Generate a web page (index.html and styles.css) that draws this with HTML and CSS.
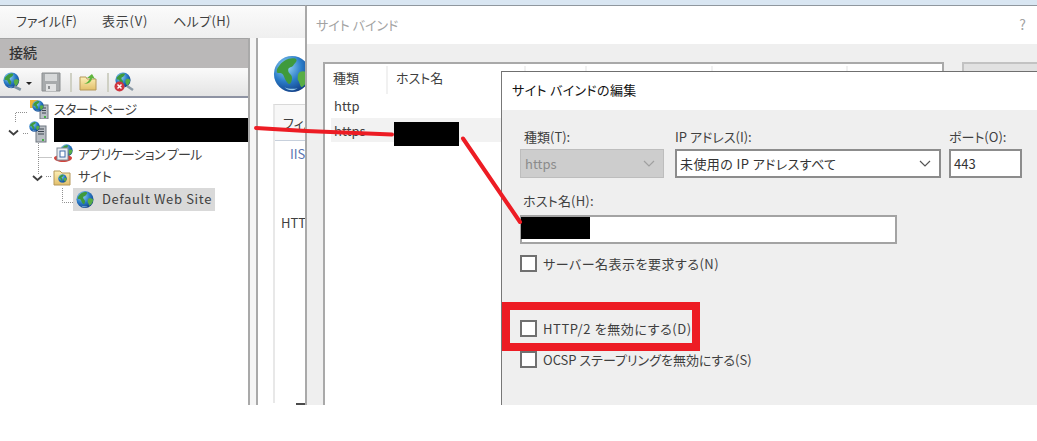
FILE: index.html
```html
<!DOCTYPE html>
<html lang="ja">
<head>
<meta charset="utf-8">
<title>サイト バインド</title>
<link rel="stylesheet" href="styles.css">
</head>
<body>
<svg class="defs" width="0" height="0" aria-hidden="true">
  <defs>
    <radialGradient id="sea" cx="35%" cy="30%" r="75%">
      <stop offset="0" stop-color="#9bd8f5"/>
      <stop offset=".55" stop-color="#2a7cc8"/>
      <stop offset="1" stop-color="#123f86"/>
    </radialGradient>
    <linearGradient id="folder" x1="0" y1="0" x2="0" y2="1">
      <stop offset="0" stop-color="#fdf0b8"/>
      <stop offset="1" stop-color="#e2bf6a"/>
    </linearGradient>
    <symbol id="globe" viewBox="0 0 20 20">
      <circle cx="10" cy="10" r="9.5" fill="url(#sea)"/>
      <path d="M3 6c2-3 6-5 9-4 1 1 0 2-1 3-1 2-3 1-3 3 0 2 2 2 2 4 0 2-1 4-2 3-2-2-2-4-3-5-1-1-3 0-3-1 0-1 0-2 1-3z" fill="#3f9a3c"/>
      <path d="M14 9c2-1 4 0 5 1 0 3-2 6-4 7-1-1-1-3-2-4 0-2 0-3 1-4z" fill="#58ad45"/>
      <path d="M6 17c2 1 5 1 7 .5-2 1.500-5 1.500-7-.5z" fill="#9fd0ee"/>
    </symbol>
    <symbol id="server" viewBox="0 0 18 22">
      <rect x="7" y="5" width="10" height="16" fill="#b9bec4" stroke="#6f7780"/>
      <path d="M9 8h6M9 10.500h6M9 13h6" stroke="#3d4650" fill="none"/>
      <rect x="13" y="18" width="2" height="2" fill="#45b045"/>
      <use href="#globe" x="0" y="0" width="11" height="11"/>
    </symbol>
    <symbol id="start" viewBox="0 0 20 20">
      <path d="M1 1h8v8H1z" fill="#f0b53c"/>
      <rect x="11" y="6" width="8" height="14" fill="#b9bec4" stroke="#6f7780"/>
      <path d="M13 9h4M13 11.500h4M13 14h4" stroke="#3d4650" fill="none"/>
      <rect x="15" y="17" width="2" height="2" fill="#45b045"/>
      <use href="#globe" x="3" y="1" width="12" height="12"/>
    </symbol>
    <symbol id="pool" viewBox="0 0 20 20">
      <use href="#globe" x="7" y="0" width="13" height="13"/>
      <path d="M1 14c0-2 4-3 9-3s9 1 9 3-4 4-9 4-9-2-9-4z" fill="#d2443c"/>
      <rect x="4" y="4" width="11" height="12" fill="#e9edf2" stroke="#7f8a96"/>
      <rect x="7" y="7" width="5" height="6" fill="#fff" stroke="#3f6aa8"/>
    </symbol>
    <symbol id="site" viewBox="0 0 18 18">
      <path d="M1 3h6l2 2h8v12H1z" fill="url(#folder)" stroke="#b5985a"/>
      <use href="#globe" x="5" y="6" width="9" height="9"/>
    </symbol>
    <symbol id="floppy" viewBox="0 0 20 20">
      <path d="M1 1h18v18H1z" fill="#a7aaac" stroke="#8c8f91"/>
      <rect x="4" y="2" width="12" height="7" fill="#d7d9da"/>
      <rect x="5" y="12" width="10" height="7" fill="#e1e2e3"/>
      <rect x="7" y="14" width="2" height="3" fill="#8c8f91"/>
    </symbol>
    <symbol id="up" viewBox="0 0 18 18">
      <path d="M1 4h6l1 2h9v11H1z" fill="url(#folder)" stroke="#b5985a"/>
      <path d="M5 11c3-1 5-3 6-6L8 5l5-4 3 5-3-1c0 3-3 6-8 6z" fill="#5fb53c"/>
    </symbol>
    <symbol id="disc" viewBox="0 0 21 20">
      <use href="#globe" x="1" y="0" width="16" height="16"/>
      <path d="M13 14l6 4" stroke="#8c9aa6" stroke-width="2.500" fill="none"/>
      <circle cx="5.500" cy="14.500" r="5" fill="#cf3640"/>
      <path d="M3.500 12.500l4 4m0-4l-4 4" stroke="#fff" stroke-width="1.500" fill="none"/>
    </symbol>
    <symbol id="conn" viewBox="0 0 18 18">
      <use href="#globe" x="0" y="0" width="15" height="15"/>
      <path d="M10 13l6 3" stroke="#7f93a3" stroke-width="2.500" fill="none"/>
    </symbol>
  </defs>
</svg>

<div class="stage">
  <div class="topstrip"></div>
  <div class="app">
    <nav class="menubar">
      <span class="menu-item mi-file">ファイル(F)</span>
      <span class="menu-item mi-view">表示(V)</span>
      <span class="menu-item mi-help">ヘルプ(H)</span>
    </nav>
    <div class="panes">
      <aside class="conn-pane">
        <div class="conn-head">接続</div>
        <div class="toolbar">
          <svg class="ti ti-conn"><use href="#conn"/></svg>
          <span class="caret"></span>
          <svg class="ti ti-floppy"><use href="#floppy"/></svg>
          <span class="tsep"></span>
          <svg class="ti ti-up"><use href="#up"/></svg>
          <span class="tsep"></span>
          <svg class="ti ti-disc"><use href="#disc"/></svg>
        </div>
        <div class="tree">
          <svg class="tree-lines" width="249" height="120" aria-hidden="true">
            <path d="M15.500 24V14.500H28M23 35.500h5M38.500 45v31M38.500 59.500H52M46 78.500h6M62.500 90v14.500H74" fill="none" stroke="#8f8f8f" stroke-dasharray="1 1"/>
            <path d="M9 32.500l4.500 4 4.500-4M33 78l4.500 4 4.500-4" fill="none" stroke="#404040" stroke-width="1.800"/>
          </svg>
          <div class="node n-start"><svg class="ni ni-start"><use href="#start"/></svg><span>スタート ページ</span></div>
          <div class="node n-server"><svg class="ni ni-server"><use href="#server"/></svg></div>
          <div class="node n-pool"><svg class="ni ni-pool"><use href="#pool"/></svg><span>アプリケーション プール</span></div>
          <div class="node n-site"><svg class="ni ni-site"><use href="#site"/></svg><span>サイト</span></div>
          <div class="node n-web"><svg class="ni ni-web"><use href="#globe"/></svg><span>Default Web Site</span></div>
        </div>
      </aside>
      <div class="gutter"></div>
      <main class="home">
        <svg class="home-globe"><use href="#globe"/></svg>
        <div class="home-box">
          <div class="home-filter">フィルター</div>
          <div class="home-iis">IIS</div>
          <div class="home-http">HTTP</div>
        </div>
        <div class="home-foot"></div>
      </main>
    </div>
  </div>

  <section class="dialog d-bind">
    <header class="dlg-title d-bind-title"><span>サイト バインド</span><span class="help">?</span></header>
    <div class="d-bind-body">
      <div class="listbox">
        <div class="lrow lhead">
          <span class="c c1">種類</span><span class="c c2">ホスト名</span><span class="c c3">ポート</span><span class="c c4">IP アドレス</span><span class="c c5">バインド情報</span><span class="c c6"></span>
        </div>
        <div class="lrow lplain"><span class="c1p">http</span></div>
        <div class="lrow lsel"><span class="c1p">https</span></div>
      </div>
      <div class="sidebtn"></div>
    </div>
  </section>

  <section class="dialog d-edit">
    <header class="dlg-title d-edit-title">サイト バインドの編集</header>
    <div class="d-edit-body">
      <div class="form-grid">
        <label class="lbl lbl-type">種類(T):</label>
        <label class="lbl">IP アドレス(I):</label>
        <label class="lbl">ポート(O):</label>
        <div class="field f-disabled">https<svg class="chev" viewBox="0 0 12 7"><path d="M1 1l5 5 5-5" fill="none" stroke="#a0a0a0" stroke-width="1.200"/></svg></div>
        <div class="field f-ip"><span class="ip-text">未使用の IP アドレスすべて</span><svg class="chev" viewBox="0 0 12 7"><path d="M1 1l5 5 5-5" fill="none" stroke="#555" stroke-width="1.200"/></svg></div>
        <div class="field f-port">443</div>
      </div>
      <label class="lbl lbl-host">ホスト名(H):</label>
      <div class="host-input"></div>
      <div class="check c-sni"><span class="box"></span>サーバー名表示を要求する(N)</div>
      <div class="check c-http2"><span class="box"></span>HTTP/2 を無効にする(D)</div>
      <div class="check c-ocsp"><span class="box"></span>OCSP ステープリングを無効にする(S)</div>
    </div>
  </section>

  <div class="mask m-tree"></div>
  <div class="mask m-list"></div>
  <div class="mask m-host"></div>
  <div class="redbox"></div>
  <svg class="ink" width="1037" height="441" aria-hidden="true">
    <path d="M256 128L306 131L392 134.500M463 138.500L520 222" fill="none" stroke="#ed1c24" stroke-width="4" stroke-linecap="round"/>
  </svg>
</div>
</body>
</html>
```

FILE: styles.css
```css
* { box-sizing: border-box; }
html, body { margin: 0; padding: 0; background: #fff; }
body {
  font-family: "Noto Sans CJK JP", "Noto Sans", sans-serif;
  font-size: 13px;
  font-feature-settings: "palt";
  color: #3f3f3f;
  overflow: hidden;
}
.defs { position: absolute; }
svg { display: block; }
.stage { position: relative; width: 1037px; height: 441px; overflow: hidden; }

.topstrip { height: 5px; background: #d9e6f2; }
.app { height: 400px; border-top: 1px solid #8f979e; display: flex; flex-direction: column; background: #f3f3f3; overflow: hidden; }

.menubar {
  height: 32px; display: flex; align-items: center; padding: 0 0 4px 16px;
  background: linear-gradient(#fbfbfb, #efefef);
}
.menu-item { white-space: nowrap; }
.mi-view { margin-left: 25px; letter-spacing: .8px; }
.mi-help { margin-left: 25px; letter-spacing: .3px; }
.panes { flex: 1; display: flex; min-height: 0; }

.conn-pane { width: 250px; flex: none; display: flex; flex-direction: column; border-right: 2px solid #a9a9a9; background: #fff; }
.conn-head { height: 30px; background: #bab8b8; border-top: 1px solid #a3a3a3; padding: 3px 0 0 9px; color: #333; font-size: 14px; font-weight: 500; line-height: 20px; flex: none; }
.toolbar {
  height: 30px; display: flex; align-items: center; padding-left: 3px; flex: none;
  background: linear-gradient(#fafafa, #e4e4e4);
  border-bottom: 2px solid #8e93a3;
}
.ti { flex: none; }
.ti-conn { width: 20px; height: 20px; }
.caret { width: 0; height: 0; border: 3px solid transparent; border-top: 3px solid #222; border-bottom: 0; margin: 2px 0 0 3px; }
.ti-floppy { width: 20px; height: 20px; margin-left: 9px; }
.tsep { width: 2px; height: 19px; background: #cfd0c4; margin: 0 7px 0 9px; }
.ti-up { width: 18px; height: 18px; }
.ti-up + .tsep { margin: 0 5px 0 10px; }
.ti-disc { width: 21px; height: 20px; }

.tree { position: relative; flex: 1; }
.tree-lines { position: absolute; left: 0; top: 0; }
.node { height: 22.5px; display: flex; align-items: center; position: relative; white-space: nowrap; }
.node span { margin-top: -2px; }
.ni { flex: none; }
.n-start { padding-left: 29px; gap: 5px; letter-spacing: -.6px; }
.ni-start { width: 20px; height: 20px; }
.n-server { padding-left: 29px; }
.ni-server { width: 18px; height: 22px; }
.n-pool { padding-left: 53px; gap: 5px; letter-spacing: -.75px; }
.ni-pool { width: 20px; height: 20px; }
.n-site { padding-left: 53px; gap: 7px; }
.ni-site { width: 18px; height: 18px; }
.n-web { margin-left: 73px; width: 142px; padding-left: 3px; gap: 8px; background: #d9d9d9; letter-spacing: .65px; }
.ni-web { width: 18px; height: 19px; }

.gutter { width: 8px; flex: none; background: #f5f5f5; border-right: 2px solid #a9a9a9; }
.home { flex: 1; display: flex; flex-direction: column; background: #fff; padding-top: 17px; min-width: 0; overflow: hidden; }
.home-globe { width: 38px; height: 38px; margin: 0 0 11px 15px; flex: none; }
.home-box { flex: 1; margin-left: 15px; border-left: 2px solid #e8e8e8; border-top: 1px solid #d9d9d9; white-space: nowrap; }
.home-filter { height: 36px; padding: 8px 0 0 8px; border-bottom: 1px solid #c7d0dc; background: #f7f7f7; }
.home-iis { color: #5a74b0; padding: 3px 0 0 15px; }
.home-http { padding: 50px 0 0 6px; }
.home-foot { height: 2px; flex: none; margin-left: 38px; background: #4a4a4a; }

.dialog { position: absolute; display: flex; flex-direction: column; background: #efefef; overflow: hidden; }
.d-bind { left: 305px; top: 5px; width: 732px; height: 400px; border-left: 2px solid #a9a9a9; border-top: 1px solid #8f979e; }
.dlg-title { flex: none; background: #fff; }
.d-bind-title { height: 38px; display: flex; justify-content: space-between; align-items: center; padding: 0 11px 2px 9px; color: #a3a3a3; }
.help { font-size: 14px; }
.d-bind-body { flex: 1; display: flex; align-items: flex-start; padding: 18px 0 0 16px; gap: 18px; min-height: 0; }
.listbox { width: 621px; height: 400px; background: #fff; border: 2px solid #a9a9a9; flex: none; }
.lrow { display: flex; height: 24px; align-items: center; }
.lhead { height: 30px; align-items: flex-start; padding-top: 2px; }
.c { height: 28px; flex: none; padding-left: 8px; border-right: 2px solid #f1f1f1; line-height: 24px; }
.c1 { width: 63px; }
.c2 { width: 138px; }
.c3 { width: 61px; }
.c4 { width: 126px; }
.c5 { width: 135px; }
.c6 { width: 94px; border-right: 0; }
.c1p { padding-left: 3px; }
.lplain { padding-left: 6px; }
.lplain .c1p { margin-top: -2px; }
.lsel { margin-left: 6px; background: #f2f2f2; }
.sidebtn { flex: 1; height: 30px; background: #e1e1e1; border: 2px solid #c2c2c2; border-right: 0; }

.d-edit { left: 501px; top: 71px; width: 536px; height: 334px; border-left: 1px solid #777; border-top: 1px solid #6f6f6f; }
.d-edit-title { height: 38px; padding: 8px 0 0 10px; color: #111; line-height: 20px; letter-spacing: .35px; }
.d-edit-body { flex: 1; padding: 17px 0 0 18px; min-height: 0; }
.form-grid { display: grid; grid-template-columns: 155px 274px 73px; grid-template-rows: 22px 28px; }
.lbl { display: block; line-height: 20px; white-space: nowrap; }
.lbl-type { padding-left: 4px; }
.field { height: 29px; display: flex; align-items: center; justify-content: space-between; padding: 0 8px 1px 4px; white-space: nowrap; }
.f-disabled { width: 144px; background: #cdcdcd; border: 1px solid #bdbdbd; color: #8b8b8b; }
.f-ip { width: 266px; background: #fff; border: 2px solid #8c8c8c; color: #333; padding-left: 3px; }
.ip-text { letter-spacing: .4px; }
.f-port { background: #fff; border: 2px solid #8c8c8c; color: #333; padding-left: 3px; }
.chev { width: 12px; height: 7px; }
.lbl-host { margin-top: 14px; padding-left: 3px; height: 22px; letter-spacing: .2px; }
.host-input { width: 377px; height: 29px; background: #fff; border: 2px solid #a3a3a3; margin-top: 2px; }
.check { display: flex; align-items: center; gap: 6px; height: 18px; white-space: nowrap; }
.box { width: 17px; height: 17px; background: #fff; border: 2px solid #707070; flex: none; }
.c-sni { margin-top: 10px; letter-spacing: .5px; }
.c-http2 { margin-top: 47px; letter-spacing: .6px; }
.c-ocsp { margin-top: 13px; }

.mask { position: absolute; background: #000; }
.m-tree { left: 54px; top: 118px; width: 194px; height: 24px; }
.m-list { left: 394px; top: 122px; width: 65px; height: 24px; }
.m-host { left: 521px; top: 217px; width: 69px; height: 22px; }
.redbox { position: absolute; left: 502px; top: 302px; width: 198px; height: 49px; border: 8px solid #ed1c24; }
.ink { position: absolute; left: 0; top: 0; pointer-events: none; }
```
